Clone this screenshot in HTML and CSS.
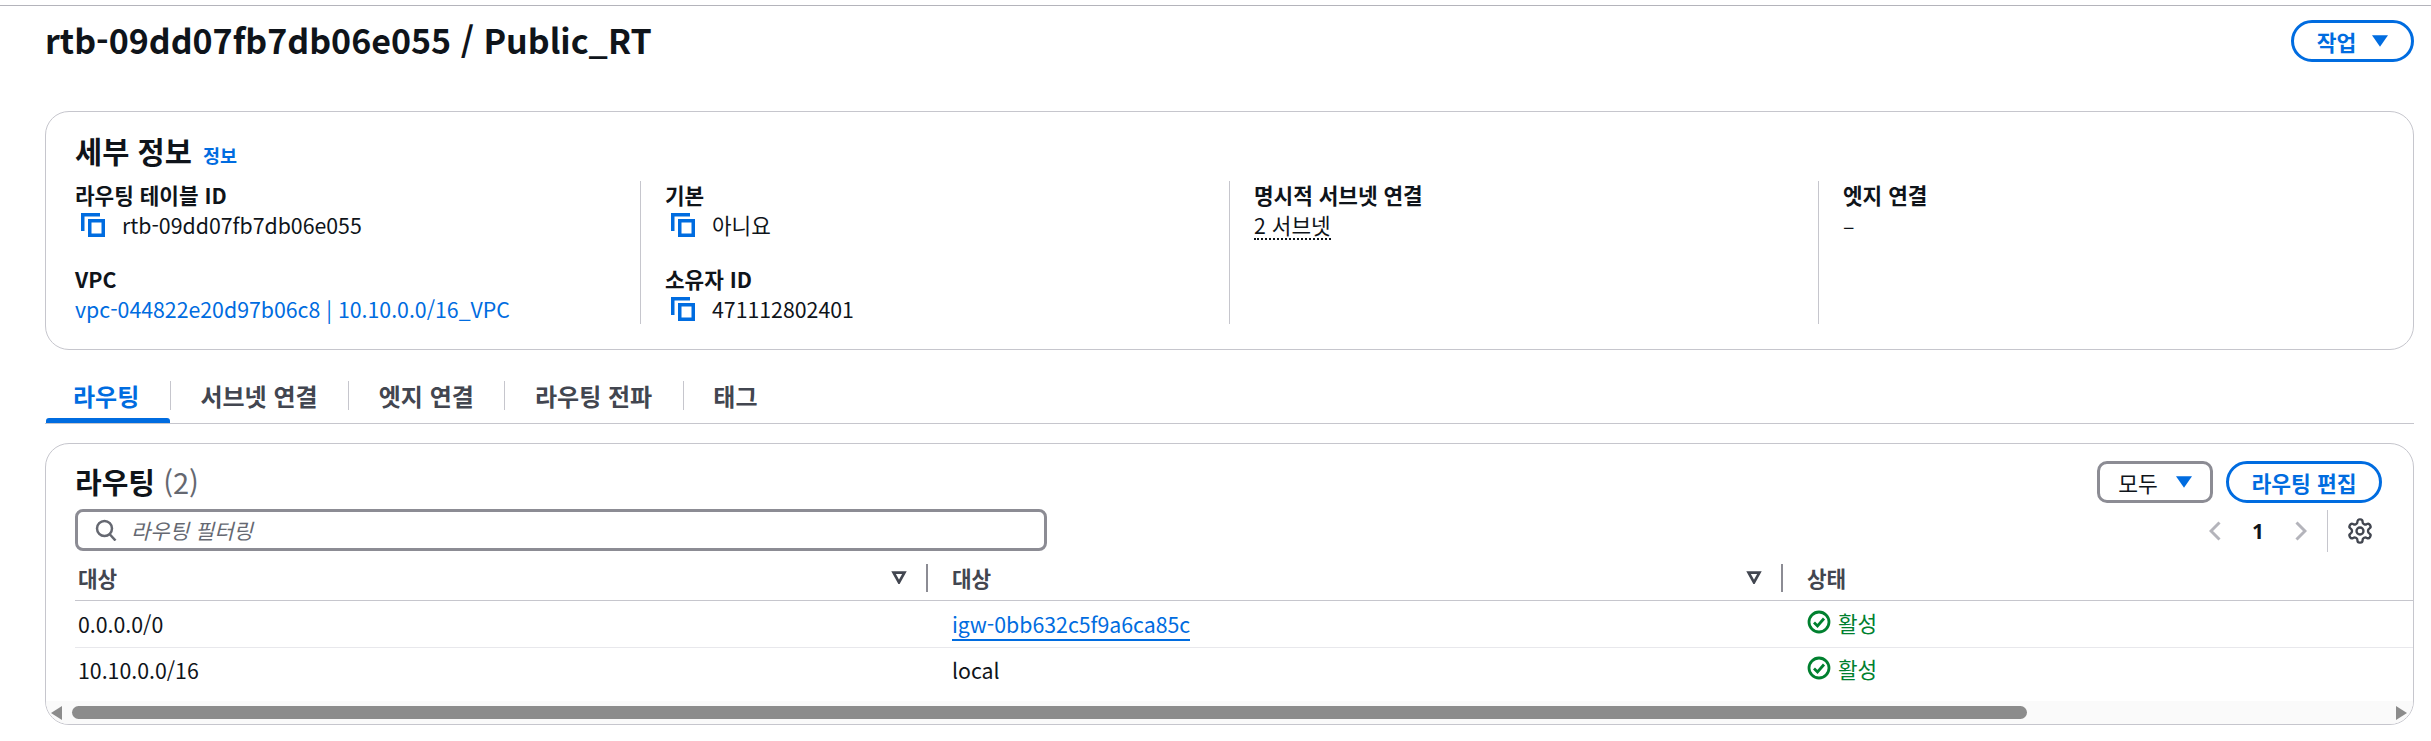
FILE: index.html
```html
<!DOCTYPE html>
<html lang="ko">
<head>
  <meta charset="UTF-8">
  <title>rtb-09dd07fb7db06e055 / Public_RT</title>
  <link rel="stylesheet" href="styles.css">
</head>
<body>
  <div class="page">
    <div class="page-head">
      <h1>rtb-09dd07fb7db06e055 / Public_RT</h1>
      <button class="btn">작업 <svg class="caret" viewBox="1 1 14 10"><path d="M1 1h14L8 11z"/></svg></button>
    </div>

    <section class="card details">
      <h2>세부 정보 <a class="info" href="#">정보</a></h2>
      <div class="columns">
        <div class="col">
          <div class="field">
            <div class="label">라우팅 테이블 ID</div>
            <div class="value">
              <svg class="copy" viewBox="0 0 24 24"><path d="M1.750 18V1.750H19M8.750 7.750h13.500v14.500H8.750z"/></svg>
              rtb-09dd07fb7db06e055
            </div>
          </div>
          <div class="field">
            <div class="label">VPC</div>
            <div class="value plain"><a href="#">vpc-044822e20d97b06c8 | 10.10.0.0/16_VPC</a></div>
          </div>
        </div>
        <div class="col">
          <div class="field">
            <div class="label">기본</div>
            <div class="value">
              <svg class="copy" viewBox="0 0 24 24"><path d="M1.750 18V1.750H19M8.750 7.750h13.500v14.500H8.750z"/></svg>
              아니요
            </div>
          </div>
          <div class="field">
            <div class="label">소유자 ID</div>
            <div class="value">
              <svg class="copy" viewBox="0 0 24 24"><path d="M1.750 18V1.750H19M8.750 7.750h13.500v14.500H8.750z"/></svg>
              471112802401
            </div>
          </div>
        </div>
        <div class="col">
          <div class="field">
            <div class="label">명시적 서브넷 연결</div>
            <div class="value plain"><span class="dotted">2 서브넷</span></div>
          </div>
        </div>
        <div class="col">
          <div class="field">
            <div class="label">엣지 연결</div>
            <div class="value plain">–</div>
          </div>
        </div>
      </div>
    </section>

    <nav class="tabs">
      <a class="tab active" href="#">라우팅</a>
      <a class="tab" href="#">서브넷 연결</a>
      <a class="tab" href="#">엣지 연결</a>
      <a class="tab" href="#">라우팅 전파</a>
      <a class="tab" href="#">태그</a>
    </nav>

    <section class="card routes">
      <div class="routes-head">
        <div class="routes-left">
          <h2>라우팅 <span class="count">(2)</span></h2>
          <div class="filter">
            <svg class="search" viewBox="0 0 22 22"><circle cx="9.500" cy="9.500" r="7.500"/><path d="M14.500 15l6 6.500"/></svg>
            <span>라우팅 필터링</span>
          </div>
        </div>
        <div class="routes-right">
          <div class="actions">
            <button class="btn select">모두 <svg class="caret" viewBox="1 1 14 10"><path d="M1 1h14L8 11z"/></svg></button>
            <button class="btn">라우팅 편집</button>
          </div>
          <div class="pager">
            <svg class="chev" viewBox="0 0 12 20"><path d="M10.500 1.500L2 10l8.500 8.500"/></svg>
            <b>1</b>
            <svg class="chev" viewBox="0 0 12 20"><path d="M1.500 1.500L10 10l-8.500 8.500"/></svg>
            <i class="pager-sep"></i>
            <svg class="gear" viewBox="0 0 24 24"><circle cx="12" cy="12" r="3"/><path d="M12.220 2h-.44a2 2 0 0 0-2 2v.18a2 2 0 0 1-1 1.730l-.43.25a2 2 0 0 1-2 0l-.15-.08a2 2 0 0 0-2.730.73l-.22.38a2 2 0 0 0 .73 2.730l.15.1a2 2 0 0 1 1 1.720v.51a2 2 0 0 1-1 1.740l-.15.09a2 2 0 0 0-.73 2.730l.22.38a2 2 0 0 0 2.730.73l.15-.08a2 2 0 0 1 2 0l.43.25a2 2 0 0 1 1 1.730V20a2 2 0 0 0 2 2h.44a2 2 0 0 0 2-2v-.18a2 2 0 0 1 1-1.730l.43-.25a2 2 0 0 1 2 0l.15.08a2 2 0 0 0 2.730-.73l.22-.39a2 2 0 0 0-.73-2.730l-.15-.08a2 2 0 0 1-1-1.740v-.5a2 2 0 0 1 1-1.740l.15-.09a2 2 0 0 0 .73-2.730l-.22-.38a2 2 0 0 0-2.730-.73l-.15.08a2 2 0 0 1-2 0l-.43-.25a2 2 0 0 1-1-1.730V4a2 2 0 0 0-2-2z"/></svg>
          </div>
        </div>
      </div>

      <table>
        <thead>
          <tr>
            <th class="c1"><div class="th-in">대상<svg class="sort" viewBox="0 0 14 12"><path d="M2 1.500h10L7 10.500z"/></svg></div></th>
            <th class="c2"><div class="th-in">대상<svg class="sort" viewBox="0 0 14 12"><path d="M2 1.500h10L7 10.500z"/></svg></div></th>
            <th>상태</th>
          </tr>
        </thead>
        <tbody>
          <tr>
            <td>0.0.0.0/0</td>
            <td><a class="link" href="#">igw-0bb632c5f9a6ca85c</a></td>
            <td><span class="status"><svg viewBox="0 0 24 24"><circle cx="12" cy="12" r="10"/><path d="M7 12.500l3.500 3.500L17 8.500"/></svg>활성</span></td>
          </tr>
          <tr>
            <td>10.10.0.0/16</td>
            <td>local</td>
            <td><span class="status"><svg viewBox="0 0 24 24"><circle cx="12" cy="12" r="10"/><path d="M7 12.500l3.500 3.500L17 8.500"/></svg>활성</span></td>
          </tr>
        </tbody>
      </table>

      <div class="scrollbar">
        <span class="arrow left"></span>
        <span class="thumb"></span>
        <span class="arrow right"></span>
      </div>
    </section>
  </div>
</body>
</html>
```

FILE: styles.css
```css
* {
  box-sizing: border-box;
}
body {
  margin: 0;
  font-family: "Noto Sans CJK KR", "Noto Sans", sans-serif;
  font-size: 21.3px;
  color: #0f141a;
  background: #fff;
}
a {
  color: #006ce0;
  text-decoration: none;
}
.page {
  border-top: 1px solid #b4b4bb;
  margin-top: 5px;
  padding: 0 17px 0 45px;
}
.page-head {
  display: flex;
  justify-content: space-between;
  align-items: flex-start;
  height: 105px;
  padding-top: 12px;
}
h1 {
  margin: 0;
  font-size: 34px;
  line-height: 44px;
  font-weight: 700;
}
h2 {
  height: 38px;
  margin: 0;
  font-size: 29.500px;
  line-height: 38px;
  font-weight: 700;
}
.btn {
  display: flex;
  align-items: center;
  justify-content: center;
  gap: 16px;
  height: 42px;
  padding: 0;
  background: #fff;
  border: 3px solid #006ce0;
  border-radius: 21px;
  color: #006ce0;
  font: 700 21.5px "Noto Sans CJK KR", sans-serif;
}
.page-head .btn {
  margin-top: 2px;
  width: 123px;
}
.caret {
  width: 16px;
  height: 12px;
  fill: #006ce0;
}
.card {
  border: 1px solid #c6c6cd;
  border-radius: 24px;
  background: #fff;
}
.details {
  height: 239px;
  padding: 19px 30px 0 29px;
}
.info {
  font-size: 18.5px;
  font-weight: 700;
  margin-left: 3px;
}
.columns {
  display: grid;
  grid-template-columns: 565px 589px 589px 1fr;
  margin-top: 12px;
}
.col {
  display: flex;
  flex-direction: column;
  gap: 26px;
  height: 143px;
  padding-left: 24px;
  border-left: 1px solid #c6c6cd;
}
.col:first-child {
  padding-left: 0;
  border-left: 0;
}
.field {
  height: 58px;
}
.label {
  font-weight: 700;
  line-height: 28px;
  margin-bottom: 2px;
}
.value {
  display: flex;
  align-items: center;
  gap: 17px;
  line-height: 28px;
  padding-left: 6px;
}
.value.plain {
  padding-left: 0;
}
.copy {
  width: 24px;
  height: 24px;
  fill: none;
  stroke: #006ce0;
  stroke-width: 3.500;
}
.dotted {
  border-bottom: 2px dotted #0f141a;
  line-height: 27px;
}
.tabs {
  display: flex;
  height: 74px;
  border-bottom: 1px solid #c6c6cd;
}
.tab {
  position: relative;
  display: flex;
  align-items: center;
  height: 73px;
  padding: 18px 30.600px 0;
  color: #424650;
  font-weight: 700;
  font-size: 24px;
}
.tab:first-child {
  padding-left: 28px;
}
.tab + .tab::before {
  content: "";
  position: absolute;
  left: 0;
  top: 31px;
  height: 29px;
  border-left: 1px solid #c6c6cd;
}
.tab.active {
  color: #006ce0;
}
.tab.active::after {
  content: "";
  position: absolute;
  left: 1px;
  right: 0;
  bottom: 0;
  height: 5px;
  border-radius: 3px 3px 0 0;
  background: #006ce0;
}
.routes {
  height: 282px;
  margin-top: 19px;
  overflow: hidden;
}
.routes-head {
  display: flex;
  justify-content: space-between;
  height: 112px;
  padding: 18px 31px 0 29px;
}
.routes h2 {
  font-size: 29px;
}
.count {
  font-weight: 400;
  color: #656871;
}
.filter {
  display: flex;
  align-items: center;
  gap: 14px;
  width: 972px;
  height: 42px;
  margin-top: 9px;
  padding-left: 17px;
  border: 3px solid #8c8c94;
  border-radius: 8px;
  color: #656871;
  font-size: 21px;
  font-style: italic;
}
.search {
  width: 22px;
  height: 22px;
  fill: none;
  stroke: #656871;
  stroke-width: 2.500;
}
.routes-right {
  display: flex;
  flex-direction: column;
  align-items: flex-end;
}
.actions {
  display: flex;
  gap: 13px;
  margin-top: -1px;
}
.actions .btn {
  width: 156px;
}
.actions .select {
  width: 116px;
  gap: 18px;
  border-color: #8c8c94;
  border-radius: 10px;
  color: #0f141a;
  font-weight: 400;
}
.pager {
  display: flex;
  align-items: center;
  height: 42px;
  margin-top: 7px;
  padding-right: 8px;
}
.chev {
  width: 12px;
  height: 20px;
  fill: none;
  stroke: #b4b4bb;
  stroke-width: 3;
}
.pager b {
  margin: 0 31px;
  font-family: "Open Sans", sans-serif;
  font-size: 21px;
}
.pager-sep {
  height: 42px;
  margin: 0 18px 0 20px;
  border-left: 1px solid #c6c6cd;
}
.gear {
  width: 28px;
  height: 28px;
  fill: none;
  stroke: #424650;
  stroke-width: 2;
}
table {
  width: calc(100% - 29px);
  margin: 0 0 8px 29px;
  border-collapse: collapse;
  table-layout: fixed;
}
th {
  height: 44px;
  padding: 0 0 0 24px;
  text-align: left;
  font-weight: 700;
  color: #424650;
  border-bottom: 1px solid #c6c6cd;
}
th:first-child, td:first-child {
  padding-left: 3px;
}
.c1 {
  width: 853px;
}
.c2 {
  width: 855px;
}
.th-in {
  display: flex;
  align-items: center;
  justify-content: space-between;
  height: 28px;
  padding-right: 19px;
  border-right: 2px solid #8c8c94;
}
.sort {
  width: 16px;
  height: 13px;
  fill: #fff;
  stroke: #424650;
  stroke-width: 2.500;
}
td {
  height: 47px;
  padding: 0 0 0 24px;
  border-bottom: 1px solid #e8e8ec;
}
tbody tr:last-child td {
  height: 46px;
  padding-bottom: 2px;
  border-bottom: 0;
}
.link {
  border-bottom: 2px solid #006ce0;
}
.status {
  display: inline-flex;
  align-items: center;
  gap: 7px;
  color: #00802f;
}
.status svg {
  width: 24px;
  height: 24px;
  fill: none;
  stroke: #00802f;
  stroke-width: 2.800;
}
.scrollbar {
  display: flex;
  align-items: center;
  height: 23px;
  background: #fafafa;
  padding: 0 6px 0 5px;
}
.thumb {
  width: 1955px;
  height: 13px;
  margin-left: 10px;
  background: #8c8c8c;
  border-radius: 7px;
}
.arrow {
  width: 0;
  height: 0;
  border-top: 7px solid transparent;
  border-bottom: 7px solid transparent;
}
.arrow.left {
  border-right: 11px solid #8c8c8c;
}
.arrow.right {
  margin-left: auto;
  border-left: 11px solid #8c8c8c;
}
```
